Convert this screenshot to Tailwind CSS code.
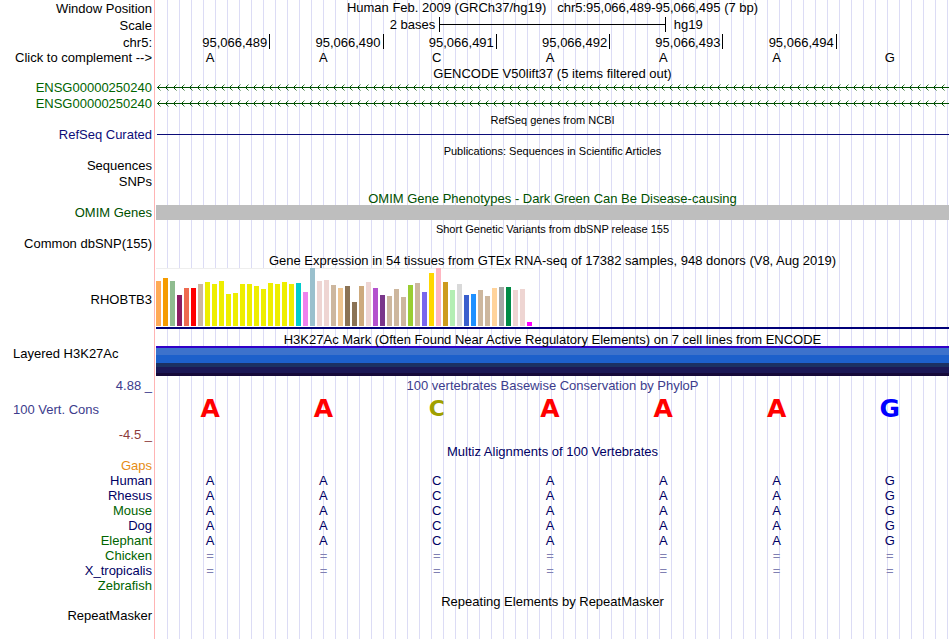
<!doctype html>
<html lang="en">

<head>
    <meta charset="utf-8">
    <title>chr5:95,066,489-95,066,495 hg19</title>
    <script src="https://cdn.jsdelivr.net/npm/@tailwindcss/browser@4"></script>
</head>

<body class="flex min-h-screen bg-white overflow-x-hidden whitespace-nowrap text-black text-[13px] leading-[15px]" style="font-family: 'Liberation Sans', Arial, sans-serif">

    <!-- track labels -->
    <aside class="flex-none w-[155px] pr-[2px] border-r border-[#ffb4b4] text-right">
        <div class="h-[17px] pt-px">Window Position</div>
        <div class="h-[17px] pt-px">Scale</div>
        <div class="h-4 pt-px">chr5:</div>
        <div class="h-[15px]">Click to complement --&gt;</div>
        <div class="h-[15px]"></div>
        <div class="h-4 text-[#006400]">ENSG00000250240</div>
        <div class="h-4 text-[#006400]">ENSG00000250240</div>
        <div class="h-[15px]"></div>
        <div class="h-4 text-[#0c0c78]">RefSeq Curated</div>
        <div class="h-[15px]"></div>
        <div class="h-4">Sequences</div>
        <div class="h-4">SNPs</div>
        <div class="h-[15px]"></div>
        <div class="h-4 text-[#005000]">OMIM Genes</div>
        <div class="h-[15px]"></div>
        <div class="h-4">Common dbSNP(155)</div>
        <div class="h-[15px]"></div>
        <div class="h-16 flex items-center justify-end">RHOBTB3</div>
        <div class="h-[15px]"></div>
        <div class="h-8 pl-[13px] text-left">Layered H3K27Ac</div>
        <div class="h-[15px] text-[#3c3c8c]">4.88 _</div>
        <div class="h-[34px] pl-[13px] pb-[2px] flex items-center text-[#3c3c8c]">100 Vert. Cons</div>
        <div class="h-4 text-[#8c3c3c]">-4.5 _</div>
        <div class="h-[15px]"></div>
        <div class="h-[15px] text-[#e68c14]">Gaps</div>
        <div class="h-[15px] text-[#000064]">Human</div>
        <div class="h-[15px] text-[#000064]">Rhesus</div>
        <div class="h-[15px] text-[#006400]">Mouse</div>
        <div class="h-[15px] text-[#000064]">Dog</div>
        <div class="h-[15px] text-[#006400]">Elephant</div>
        <div class="h-[15px] text-[#006400]">Chicken</div>
        <div class="h-[15px] text-[#000064]">X_tropicalis</div>
        <div class="h-[15px] text-[#006400]">Zebrafish</div>
        <div class="h-[15px]"></div>
        <div class="h-4">RepeatMasker</div>
    </aside>

    <!-- track data, guide line every 12px -->
    <main class="flex-1 min-w-0 mx-px text-center bg-[repeating-linear-gradient(to_right,transparent_0px_11px,#dcdcf5_11px_12px)]">
        <div class="h-[17px] whitespace-pre">Human Feb. 2009 (GRCh37/hg19)   chr5:95,066,489-95,066,495 (7 bp)</div>
        <div class="h-[17px] grid grid-cols-14">
            <div class="col-span-5 pr-1 text-right">2 bases</div>
            <div class="col-span-4 h-[15px] border-x border-black flex items-center">
                <div class="w-full h-px bg-black"></div>
            </div>
            <div class="col-span-5 pl-2 text-left">hg19</div>
        </div>
        <div class="h-4 grid grid-cols-7 text-right">
            <div class="h-[15px] pr-[2px] pt-px">95,066,489</div>
            <div class="h-[15px] pr-[2px] pt-px border-l border-black">95,066,490</div>
            <div class="h-[15px] pr-[2px] pt-px border-l border-black">95,066,491</div>
            <div class="h-[15px] pr-[2px] pt-px border-l border-black">95,066,492</div>
            <div class="h-[15px] pr-[2px] pt-px border-l border-black">95,066,493</div>
            <div class="h-[15px] pr-[2px] pt-px border-l border-black">95,066,494</div>
            <div class="h-[15px] border-l border-black"></div>
        </div>
        <div class="h-[15px] grid grid-cols-7 *:pr-[5px]">
            <span>A</span><span>A</span><span>C</span><span>A</span><span>A</span><span>A</span><span>G</span>
        </div>

        <div class="h-[15px] leading-[17px]">GENCODE V50lift37 (5 items filtered out)</div>
        <svg class="block w-full h-8" shape-rendering="crispEdges">
            <defs>
                <pattern id="intron" width="8" height="16" patternUnits="userSpaceOnUse">
                    <path d="M0 7h8v1H0zM2 6h1v3H2z" fill="#005000" />
                    <path d="M3 5h1v1H3zM3 9h1v1H3z" fill="#005000" fill-opacity=".8" />
                    <path d="M4 4h1v1H4zM4 10h1v1H4z" fill="#005000" fill-opacity=".4" />
                </pattern>
            </defs>
            <rect x="1" width="100%" height="32" fill="url(#intron)" />
        </svg>

        <div class="h-[15px] text-[11px] leading-[17px]">RefSeq genes from NCBI</div>
        <div class="h-4 pt-[7px] pl-px">
            <div class="h-px bg-[#0c0c78]"></div>
        </div>

        <div class="h-[15px] text-[11px] leading-[17px]">Publications: Sequences in Scientific Articles</div>
        <div class="h-8"></div>

        <div class="h-[15px] leading-[17px] text-[#005000]">OMIM Gene Phenotypes - Dark Green Can Be Disease-causing</div>
        <div class="h-4">
            <div class="h-[15px] bg-[#bebebe]"></div>
        </div>

        <div class="h-[15px] text-[11px] leading-[17px]">Short Genetic Variants from dbSNP release 155</div>
        <div class="h-4"></div>

        <div class="h-[15px] leading-[17px]">Gene Expression in 54 tissues from GTEx RNA-seq of 17382 samples, 948 donors (V8, Aug 2019)</div>
        <div class="h-16">
            <div class="h-[60px] pt-px">
                <div id="gtex" class="w-[377px] h-[59px] pb-px border-t border-[#eeeeee] bg-white flex items-end gap-[2px]"></div>
            </div>
            <div class="h-[2px] bg-[#000078]"></div>
        </div>

        <div class="h-[15px] leading-[17px]">H3K27Ac Mark (Often Found Near Active Regulatory Elements) on 7 cell lines from ENCODE</div>
        <div class="h-8">
            <div class="h-[2px] bg-[#3200c8]"></div>
            <div class="h-[7px] bg-[#3d72cc]"></div>
            <div class="h-2 bg-[#1d60cb]"></div>
            <div class="h-1 bg-[#1c3162]"></div>
            <div class="h-[6px] bg-[#1c1856]"></div>
            <div class="h-[3px] bg-[#160a3a]"></div>
        </div>

        <div class="h-[15px] text-[#3c3c8c]">100 vertebrates Basewise Conservation by PhyloP</div>
        <div class="h-[34px] pb-1 grid grid-cols-7 items-end font-bold text-[25px] leading-[29px] text-[#ff0000] *:pr-[5px]" style="font-family: 'DejaVu Sans', sans-serif">
            <span>A</span><span>A</span><span class="text-[22px] text-[#a0a000]">C</span><span>A</span><span>A</span><span>A</span><span class="text-[#0000ff]">G</span>
        </div>
        <div class="h-4"></div>

        <div class="h-[15px] leading-[17px] text-[#000064]">Multiz Alignments of 100 Vertebrates</div>
        <div class="h-[15px]"></div>
        <div id="multiz" class="h-[120px] grid grid-cols-7 auto-rows-[15px] text-[#000064] *:pr-[5px]"></div>

        <div class="h-[15px] leading-[17px]">Repeating Elements by RepeatMasker</div>
        <div class="h-4"></div>
    </main>

    <script>
        // [height, color] of each tissue
        const tissues = [
            [45, '#ffaa56'], [48, '#f59b00'], [45, '#8fbc8f'], [31, '#8b1c62'], [38, '#ee6a50'], [38, '#ff0000'],
            [42, '#cdb79e'], [44, '#eeee00'], [42, '#eeee00'], [45, '#eeee00'], [32, '#eeee00'], [33, '#eeee00'],
            [42, '#eeee00'], [42, '#eeee00'], [40, '#eeee00'], [37, '#eeee00'], [43, '#eeee00'], [42, '#eeee00'],
            [44, '#eeee00'], [42, '#eeee00'], [43, '#00cdcd'], [34, '#ee82ee'], [58, '#9ac0cd'], [45, '#eed5d2'],
            [46, '#eed5d2'], [41, '#cdb79e'], [38, '#eec591'], [40, '#8b7355'], [24, '#8b7355'], [40, '#cdaa7d'],
            [44, '#eed5d2'], [38, '#b452cd'], [31, '#7a378b'], [30, '#cdb79e'], [37, '#cdb79e'], [29, '#cdb79e'],
            [41, '#9acd32'], [43, '#cdb79e'], [34, '#7a67ee'], [53, '#ffd700'], [58, '#ffb6c1'], [44, '#cd9b1d'],
            [36, '#b4eeb4'], [42, '#d9d9d9'], [31, '#3a5fcd'], [32, '#1e90ff'], [36, '#cdb79e'], [30, '#cdb79e'],
            [38, '#ffd39b'], [39, '#a6a6a6'], [39, '#008b45'], [36, '#eed5d2'], [37, '#eed5d2'], [4, '#ff00ff']
        ];
        document.getElementById('gtex').innerHTML = tissues
            .map(([h, c]) => `<div class="w-[5px] flex-none" style="height:${h}px;background:${c}"></div>`).join('');

        const rows = ['AACAAAG', 'AACAAAG', 'AACAAAG', 'AACAAAG', 'AACAAAG', '=======', '======='];
        document.getElementById('multiz').innerHTML = rows.join('').split('')
            .map(b => b === '=' ? '<span class="text-[#8080b2]">=</span>' : `<span>${b}</span>`).join('');
    </script>
</body>

</html>
